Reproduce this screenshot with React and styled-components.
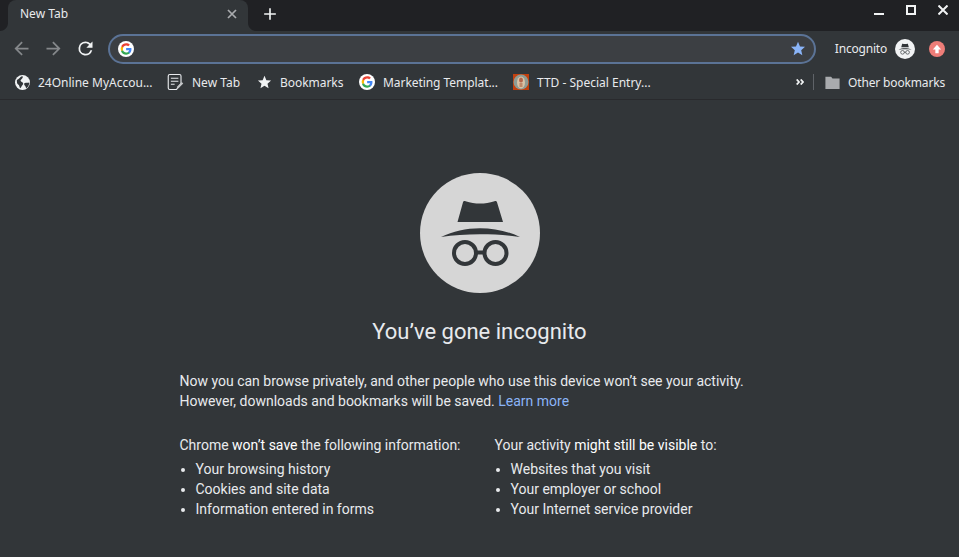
import React from "react";
import styled, { createGlobalStyle } from "styled-components";

const GlobalStyle = createGlobalStyle`
  html, body {
    margin: 0;
    height: 100%;
    background: #323639;
  }
  #root {
    height: 100%;
  }
`;

const Page = styled.div`
  width: 959px;
  height: 557px;
  overflow: hidden;
  display: flex;
  flex-direction: column;
  background: #323639;
  font-family: "Noto Sans", sans-serif;
  color: #e8eaed;
`;

/* ---- tab strip ---- */
const TabStrip = styled.div`
  height: 31px;
  flex: none;
  background: #202124;
  display: flex;
  align-items: stretch;
  padding-left: 8px;
`;

const Tab = styled.div`
  position: relative;
  width: 240px;
  background: #323639;
  border-radius: 8px 8px 0 0;
  display: flex;
  align-items: center;
  justify-content: space-between;
  padding: 0 10px 4px 12px;
  box-sizing: border-box;
  font-size: 12px;
  color: #e8eaed;

  /* the little inverted corners at the foot of the tab */
  &::before,
  &::after {
    content: "";
    position: absolute;
    bottom: 0;
    width: 8px;
    height: 8px;
  }
  &::before {
    left: -8px;
    background: radial-gradient(circle at 0 0, #202124 7.5px, #323639 8.5px);
  }
  &::after {
    right: -8px;
    background: radial-gradient(circle at 100% 0, #202124 7.5px, #323639 8.5px);
  }
`;

const NewTab = styled.div`
  width: 16px;
  margin-left: 15px;
  display: flex;
  align-items: center;
  padding-bottom: 4px;
`;

const WindowControls = styled.div`
  margin-left: auto;
  display: flex;
  align-items: flex-start;
  gap: 22px;
  padding: 5px 11px 0 0;
`;

/* ---- toolbar ---- */
const Toolbar = styled.div`
  height: 35px;
  flex: none;
  display: flex;
  align-items: center;
  padding: 0 14px 0 6px;
`;

const NavIcon = styled.span`
  display: flex;
  justify-content: center;
  width: 32px;
  height: 21px;
`;

const Omnibox = styled.div`
  width: 709px;
  height: 30px;
  margin-left: 6px;
  box-sizing: border-box;
  border: 2px solid #5b7396;
  border-radius: 15px;
  background: #3c3f43;
  display: flex;
  align-items: center;
  justify-content: space-between;
  padding: 0 8px 0 8px;
`;

const IncognitoBadge = styled.div`
  display: flex;
  align-items: center;
  margin-left: 19px;
  font-size: 12px;
  letter-spacing: -0.2px;
  color: #e8eaed;
  gap: 8px;
`;

const SpyChip = styled.span`
  display: block;
  background: #f1f3f4;
  border-radius: 50%;
`;

const UpdateBadge = styled.span`
  width: 16px;
  height: 16px;
  border-radius: 50%;
  background: #ee7d78;
  margin-left: 14px;
  display: flex;
  align-items: center;
  justify-content: center;
`;

/* ---- bookmarks ---- */
const BookmarkBar = styled.div`
  height: 34px;
  flex: none;
  box-sizing: border-box;
  border-bottom: 1px solid #292a2d;
  display: flex;
  align-items: center;
  padding: 0 14px 1px 15px;
  font-size: 12px;
  color: #e8eaed;
`;

const Bookmark = styled.div`
  display: flex;
  align-items: center;
  gap: ${(p) => p.$gap || 8}px;
  width: ${(p) => p.$w}px;
  flex: none;
  white-space: nowrap;
`;

const BookmarkLabel = styled.span`
  letter-spacing: ${(p) => p.$spacing || 0}px;
`;

const Chevrons = styled.span`
  margin-left: auto;
  display: flex;
`;

const Divider = styled.span`
  width: 1px;
  height: 16px;
  background: #5f6368;
  margin: 0 10px 0 9px;
`;

/* ---- page content ---- */
const Content = styled.main`
  width: 600px;
  margin: 73px auto 0;
  font-family: Roboto, sans-serif;
  font-size: 14px;
  line-height: 20px;
  color: #e8eaed;
`;

const Avatar = styled.div`
  width: 120px;
  height: 120px;
  border-radius: 50%;
  background: #d6d6d6;
  margin: 0 auto;
`;

const Heading = styled.h1`
  margin: 25px 0 0;
  font-size: 22px;
  font-weight: 400;
  line-height: 28px;
  text-align: center;
`;

const Intro = styled.p`
  margin: 25px 0 0;
  white-space: nowrap;
`;

const Link = styled.a`
  color: #8ab4f8;
`;

const Columns = styled.div`
  display: grid;
  grid-template-columns: 315px 1fr;
  margin-top: 22px;
`;

const ColumnTitle = styled.div`
  margin-bottom: 2px;
  height: 24px;
  line-height: 24px;
  white-space: nowrap;
`;

const Strong = styled.span`
  color: #fff;
`;

const List = styled.ul`
  margin: 0;
  padding: 0 0 0 16px;
`;

const Glyph = ({ children, size = 16, box = 24 }) => (
  <svg width={size} height={size} viewBox={`0 0 ${box} ${box}`} style={{ flex: "none" }}>
    {children}
  </svg>
);

const GoogleG = ({ size = 16 }) => (
  <svg width={size} height={size} viewBox="0 0 24 24" style={{ flex: "none" }}>
    <circle cx="12" cy="12" r="12" fill="#fff" />
    <path fill="#4285f4" d="M20.2 12.2c0-.6-.1-1.2-.2-1.7h-7.8v3.2h4.5c-.2 1-.8 1.9-1.7 2.5v2.1h2.7c1.6-1.5 2.5-3.6 2.5-6.1z" />
    <path fill="#34a853" d="M12.2 20.5c2.2 0 4.1-.7 5.5-2l-2.7-2.1c-.7.5-1.7.8-2.8.8-2.2 0-4-1.5-4.6-3.4H4.8v2.2c1.4 2.7 4.2 4.5 7.4 4.5z" />
    <path fill="#fbbc05" d="M7.6 13.8c-.3-1-.3-2 0-3V8.6H4.8c-1 1.9-1 4.2 0 6.2z" />
    <path fill="#ea4335" d="M12.2 6.8c1.2 0 2.3.4 3.2 1.2l2.4-2.4C16.300 4.200 14.300 3.500 12.200 3.500c-3.200 0-6 1.800-7.400 4.500l2.800 2.200c.6-2 2.400-3.400 4.600-3.400z" />
  </svg>
);

const SpyFace = ({ size, fg }) => (
  <svg width={size} height={size} viewBox="0 0 120 120" style={{ display: "block" }}>
    <path fill={fg} d="M45.500 28.200c5 1.600 9.500 2.300 14.500 2.300s9.500-.7 14.500-2.300c1.200-.4 2.200 0 2.500 1L83 49H37.500l5.500-19.800c.3-1 1.300-1.400 2.500-1z" />
    <path fill={fg} d="M21 64C33 58 46 55.200 60 55.200S87 58 100 64c-12-1.800-26-2.700-40-2.700S33 62.200 21 64z" />
    <path fill="none" stroke={fg} strokeWidth="4" d="M55 79.500h10" />
    <circle cx="45" cy="80" r="11" fill="none" stroke={fg} strokeWidth="4" />
    <circle cx="75.500" cy="80" r="11" fill="none" stroke={fg} strokeWidth="4" />
  </svg>
);

const ArrowLeft = () => (
  <Glyph size={21}>
    <path fill="#85888b" d="M20 11H7.800l5.600-5.600L12 4l-8 8 8 8 1.400-1.400L7.800 13H20z" />
  </Glyph>
);

const ArrowRight = () => (
  <Glyph size={21}>
    <path fill="#85888b" d="M4 11h12.200l-5.600-5.600L12 4l8 8-8 8-1.400-1.400 5.600-5.600H4z" />
  </Glyph>
);

const Reload = () => (
  <Glyph size={21}>
    <path fill="#f1f3f4" d="M17.650 6.350A7.960 7.960 0 0 0 12 4a8 8 0 1 0 7.730 10h-2.080A6 6 0 1 1 12 6c1.660 0 3.140.69 4.220 1.780L13 11h7V4z" />
  </Glyph>
);

const Star = ({ size = 16, color = "#8ab4f8" }) => (
  <Glyph size={size}>
    <path fill={color} d="M12 17.300l6.500 3.900-1.700-7.400 5.700-5-7.500-.6L12 1.200 9 8.200l-7.500.6 5.700 5-1.700 7.400z" />
  </Glyph>
);

const Globe = () => (
  <Glyph size={15}>
    <circle cx="12" cy="12" r="12" fill="#f1f3f4" />
    <path fill="#323639" d="M3 8c3-1 5-5 8-6 3 0 1 4-1 5s-1 3 1 4 3 3 1 5-2 5-4 5c-1-3-1-5-3-6S3 11 3 8z" />
    <path fill="#323639" d="M15 13c3-1 5 0 8-1 0 3-2 8-5 9-1-2-1-3-2-4s-2-3-1-4z" />
  </Glyph>
);

const NotePage = () => (
  <Glyph size={18}>
    <path fill="none" stroke="#e8eaed" strokeWidth="1.500" d="M5 2h13a2 2 0 0 1 2 2v10l-6 8H5a2 2 0 0 1-2-2V4a2 2 0 0 1 2-2z" />
    <path stroke="#e8eaed" strokeWidth="1.500" d="M6.500 7h10M6.500 11h10M6.500 15h5" />
    <path fill="#c4c6c8" d="M14 22l1-4 6-6 2 2-6 6z" />
  </Glyph>
);

const TempleIcon = () => (
  <svg width="16" height="16" viewBox="0 0 16 16" style={{ flex: "none" }}>
    <rect width="16" height="16" fill="#c2410f" />
    <circle cx="8" cy="8" r="7.500" fill="#8f9c94" />
    <ellipse cx="8" cy="8.500" rx="4" ry="6" fill="#d9c3a5" />
    <ellipse cx="8" cy="6" rx="2" ry="2.500" fill="#b5654a" />
    <rect x="6.500" y="9" width="3" height="4" fill="#c08a6a" />
  </svg>
);

const Folder = () => (
  <Glyph size={17}>
    <path fill="#a9abae" d="M2 4h8l2 2.500h10V21H2z" />
  </Glyph>
);

function App() {
  return (
    <Page>
      <GlobalStyle />
      <TabStrip>
        <Tab>
          <span>New Tab</span>
          <Glyph size={12}>
            <path stroke="#a9abae" strokeWidth="3.500" d="M4 4l16 16M20 4L4 20" />
          </Glyph>
        </Tab>
        <NewTab>
          <Glyph size={14}>
            <path stroke="#f1f3f4" strokeWidth="2.800" d="M12 2v20M2 12h20" />
          </Glyph>
        </NewTab>
        <WindowControls>
          <Glyph size={10} box={10}>
            <path stroke="#f1f3f4" strokeWidth="2" d="M0 9h10" />
          </Glyph>
          <Glyph size={10} box={10}>
            <path fill="none" stroke="#f1f3f4" strokeWidth="2" d="M1 1h8v8H1z" />
          </Glyph>
          <Glyph size={10} box={10}>
            <path stroke="#f1f3f4" strokeWidth="2" d="M.5.500l9 9M9.500.500l-9 9" />
          </Glyph>
        </WindowControls>
      </TabStrip>

      <Toolbar>
        <NavIcon><ArrowLeft /></NavIcon>
        <NavIcon><ArrowRight /></NavIcon>
        <NavIcon><Reload /></NavIcon>
        <Omnibox>
          <GoogleG />
          <Star />
        </Omnibox>
        <IncognitoBadge>
          Incognito
          <SpyChip><SpyFace size={20} fg="#323639" /></SpyChip>
        </IncognitoBadge>
        <UpdateBadge>
          <Glyph size={10}>
            <path fill="#fff" d="M12 2L2 13h6v9h8v-9h6z" />
          </Glyph>
        </UpdateBadge>
      </Toolbar>

      <BookmarkBar>
        <Bookmark $w={151}><Globe /><BookmarkLabel>24Online MyAccou...</BookmarkLabel></Bookmark>
        <Bookmark $w={91}><NotePage /><BookmarkLabel>New Tab</BookmarkLabel></Bookmark>
        <Bookmark $w={102}><Star size={15} color="#f1f3f4" /><BookmarkLabel $spacing={-0.05}>Bookmarks</BookmarkLabel></Bookmark>
        <Bookmark $w={154}><GoogleG /><BookmarkLabel $spacing={-0.06}>Marketing Templat...</BookmarkLabel></Bookmark>
        <Bookmark $w={150}><TempleIcon /><BookmarkLabel>TTD - Special Entry...</BookmarkLabel></Bookmark>
        <Chevrons>
          <svg width="8" height="6" viewBox="0 0 8 6">
            <path fill="none" stroke="#f1f3f4" strokeWidth="1.800" d="M.7.500L3 3 .7 5.500M4.700.500L7 3 4.700 5.500" />
          </svg>
        </Chevrons>
        <Divider />
        <Bookmark $w={121} $gap={7}><Folder /><BookmarkLabel $spacing={-0.15}>Other bookmarks</BookmarkLabel></Bookmark>
      </BookmarkBar>

      <Content>
        <Avatar><SpyFace size={120} fg="#323639" /></Avatar>
        <Heading>You’ve gone incognito</Heading>
        <Intro>
          Now you can browse privately, and other people who use this device won’t see your activity.
          <br />
          However, downloads and bookmarks will be saved. <Link>Learn more</Link>
        </Intro>
        <Columns>
          <div>
            <ColumnTitle>Chrome <Strong>won’t save</Strong> the following information:</ColumnTitle>
            <List>
              <li>Your browsing history</li>
              <li>Cookies and site data</li>
              <li>Information entered in forms</li>
            </List>
          </div>
          <div>
            <ColumnTitle>Your activity <Strong>might still be visible</Strong> to:</ColumnTitle>
            <List>
              <li>Websites that you visit</li>
              <li>Your employer or school</li>
              <li>Your Internet service provider</li>
            </List>
          </div>
        </Columns>
      </Content>
    </Page>
  );
}

export default App;
